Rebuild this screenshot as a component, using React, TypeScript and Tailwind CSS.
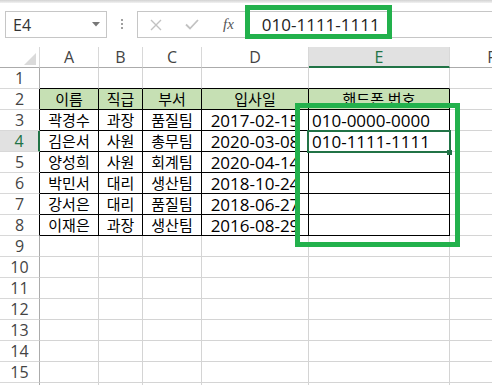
import React from "react";

const COLS = ["A", "B", "C", "D", "E", "F"];

const DATA: Record<number, string[]> = {
  2: ["이름", "직급", "부서", "입사일", "핸드폰 번호"],
  3: ["곽경수", "과장", "품질팀", "2017-02-15", "010-0000-0000"],
  4: ["김은서", "사원", "총무팀", "2020-03-08", "010-1111-1111"],
  5: ["양성희", "사원", "회계팀", "2020-04-14", ""],
  6: ["박민서", "대리", "생산팀", "2018-10-24", ""],
  7: ["강서은", "대리", "품질팀", "2018-06-27", ""],
  8: ["이재은", "과장", "생산팀", "2016-08-29", ""],
};

const ROWS = Array.from({ length: 16 }, (_, i) => i + 1);

function FormulaBar() {
  return (
    <div className="flex h-[44px] items-start pt-[8px]">
      <div className="ml-[5px] flex h-[27px] w-[102px] items-center justify-between border border-[#c6c6c6] pl-[7px] pr-[6px]">
        <span className="text-[16px] leading-none text-[#333]">E4</span>
        <svg width="8" height="5" viewBox="0 0 8 5">
          <polygon points="0,0 8,0 4,4.5" fill="#777" />
        </svg>
      </div>
      <div className="ml-[14px] mt-[8px] flex w-[2px] flex-col gap-[2px]">
        <span className="h-[2px] w-[2px] bg-[#a0a0a0]" />
        <span className="h-[2px] w-[2px] bg-[#a0a0a0]" />
        <span className="h-[2px] w-[2px] bg-[#a0a0a0]" />
      </div>
      <div className="ml-[14px] flex h-[27px] flex-1 items-center border border-r-0 border-[#c6c6c6]">
        <svg className="ml-[12px]" width="12" height="12" viewBox="0 0 12 12">
          <path d="M1 1 L11 11 M11 1 L1 11" stroke="#c2c2c2" strokeWidth="1.4" fill="none" />
        </svg>
        <svg className="ml-[23px]" width="14" height="11" viewBox="0 0 14 11">
          <path d="M1 5.5 L5 9.5 L13 1" stroke="#c2c2c2" strokeWidth="1.8" fill="none" />
        </svg>
        <span className="ml-[24px] font-['Liberation_Serif',serif] text-[15px] italic leading-none text-[#555]">fx</span>
        <span className="ml-[28px] text-[17px] leading-none text-[#222]">010-1111-1111</span>
      </div>
    </div>
  );
}

function ColHeader() {
  return (
    <>
      <div className="relative h-[21px] border-b border-r border-b-[#ababab] border-r-[#d8d8d8]">
        <svg className="absolute left-[24px] top-[6px]" width="12" height="12" viewBox="0 0 12 12">
          <polygon points="12,0 12,12 0,12" fill="#dadada" />
        </svg>
      </div>
      {COLS.map((c) =>
        c === "E" ? (
          <div
            key={c}
            className="flex h-[21px] items-center justify-center border-b-2 border-r border-b-[#217346] border-r-[#d8d8d8] bg-[#e1e1e1] text-[16px] leading-none text-[#217346]"
          >
            {c}
          </div>
        ) : (
          <div
            key={c}
            className="flex h-[21px] items-center justify-center border-b border-r border-b-[#ababab] border-r-[#d8d8d8] text-[16px] leading-none text-[#444]"
          >
            {c}
          </div>
        )
      )}
    </>
  );
}

function RowHeader({ r }: { r: number }) {
  if (r === 4) {
    return (
      <div className="flex h-[21px] items-center justify-center border-b border-r-2 border-b-[#d8d8d8] border-r-[#217346] bg-[#e1e1e1] text-[16px] leading-none text-[#217346]">
        {r}
      </div>
    );
  }
  const inTable = r >= 2 && r <= 8;
  return (
    <div
      className={
        "flex h-[21px] items-center justify-center border-b border-r border-b-[#d8d8d8] text-[16px] leading-none text-[#444] " +
        (inTable ? "border-r-black" : "border-r-[#ababab]")
      }
    >
      {/* row 16 only peeks in at the bottom edge, so no number is shown */}
      {r < 16 ? r : ""}
    </div>
  );
}

function Cell({ r, c }: { r: number; c: number }) {
  const inCols = c <= 4;
  const inTable = inCols && r >= 2 && r <= 8;
  const right = inTable ? "border-r-black" : "border-r-[#d4d4d4]";
  const bottom = inTable || (inCols && r === 1) ? "border-b-black" : "border-b-[#d4d4d4]";
  const text = DATA[r]?.[c] ?? "";
  const numeric = /^[0-9-]+$/.test(text);
  const bg = inTable && r === 2 ? "bg-[#c6e0b4]" : "bg-white";
  let align = "justify-center";
  if (c === 4 && r > 2) align = "justify-start pl-[3px]";
  return (
    <div
      className={`flex h-[21px] items-center overflow-hidden whitespace-nowrap border-b border-r text-black ${right} ${bottom} ${bg} ${align} ${
        numeric ? "text-[17px] leading-[21px]" : "text-[15px] leading-[21px]"
      }`}
    >
      {text}
    </div>
  );
}

export default function App() {
  return (
    <div className="relative h-[385px] w-[492px] overflow-hidden bg-white font-['Open_Sans','Noto_Sans_CJK_KR',sans-serif]">
      <div className="h-[3px] bg-gradient-to-b from-[#d2d2d2] to-[#f2f2f2]" />
      <FormulaBar />

      <div className="relative">
        <div className="grid w-[534px] grid-cols-[40px_59px_44px_59px_107px_141px_84px]">
          <ColHeader />
          {ROWS.map((r) => (
            <React.Fragment key={r}>
              <RowHeader r={r} />
              {COLS.map((_, c) => (
                <Cell key={c} r={r} c={c} />
              ))}
            </React.Fragment>
          ))}
        </div>

        {/* selected cell E4 */}
        <div className="absolute left-[307px] top-[83px] h-[23px] w-[144px] border-2 border-[#217346]" />
        <div className="absolute left-[447px] top-[103px] h-[5px] w-[5px] bg-[#217346]" />

        {/* highlight around column E */}
        <div className="absolute left-[295px] top-[56px] h-[144px] w-[165px] border-[5px] border-[#22b14c]" />
      </div>

      {/* highlight around formula text */}
      <div className="absolute left-[245px] top-[5px] h-[34px] w-[147px] border-[5px] border-[#22b14c]" />
    </div>
  );
}
